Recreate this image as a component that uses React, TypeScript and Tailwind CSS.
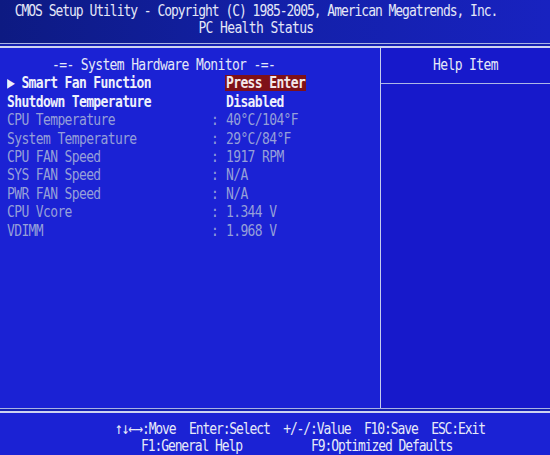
import React from "react";

const rows = [
  { label: "Smart Fan Function", value: "Press Enter", kind: "sub" },
  { label: "Shutdown Temperature", value: "Disabled", kind: "edit" },
  { label: "CPU Temperature", value: "40°C/104°F", kind: "info" },
  { label: "System Temperature", value: "29°C/84°F", kind: "info" },
  { label: "CPU FAN Speed", value: "1917 RPM", kind: "info" },
  { label: "SYS FAN Speed", value: "N/A", kind: "info" },
  { label: "PWR FAN Speed", value: "N/A", kind: "info" },
  { label: "CPU Vcore", value: "1.344 V", kind: "info" },
  { label: "VDIMM", value: "1.968 V", kind: "info" },
];

// BIOS glyphs are tall and narrow: stretch the text vertically
function T({ children }: { children: React.ReactNode }) {
  return <span className="inline-block scale-y-125 origin-center">{children}</span>;
}

export default function App() {
  return (
    <div
      className="w-[550px] h-[455px] overflow-hidden bg-[#1b22d4] flex flex-col text-[13px] tracking-[-0.63px] whitespace-pre"
      style={{ fontFamily: '"DejaVu Sans Mono", "Liberation Mono", monospace' }}
    >
      {/* Title */}
      <header className="h-[43px] bg-gradient-to-r from-[#0d1a82] via-[#1320a8] to-[#1822c0] pr-[38px] pt-[2px] text-center text-[#e4e7f7] leading-[17px]">
        <div className="tracking-[-1.03px]"><T>CMOS Setup Utility - Copyright (C) 1985-2005, American Megatrends, Inc.</T></div>
        <div><T>PC Health Status</T></div>
      </header>

      {/* double rule */}
      <div className="h-[1px] bg-[#aab4e4]" />
      <div className="h-[2px] bg-[#1420b0]" />
      <div className="h-[2px] bg-[#cdd3f1]" />

      {/* main area */}
      <div className="flex flex-1">
        <section className="w-[380px] pt-[8px]">
          <div className="h-[18.4px] leading-[18.4px] pl-[52px] text-[#e4e8f8]"><T>-=- System Hardware Monitor -=-</T></div>
          {rows.map((r) => {
            const bright = r.kind !== "info";
            return (
              <div key={r.label} className="h-[18.4px] leading-[18.4px] flex">
                <div className={`w-[211px] pl-[7px] ${bright ? "text-[#eef0fb] font-bold" : "text-[#959fd9]"}`}>
                  <T>
                    {r.kind === "sub" ? "▶ " : ""}
                    {r.label}
                  </T>
                </div>
                <div className="w-[15px] text-[#959fd9]"><T>{bright ? " " : ":"}</T></div>
                {r.kind === "sub" ? (
                  <div className="mt-[1px] h-[16px] leading-[16px] px-[1px] -ml-[1px] bg-[#7f1118] text-[#f4e8ea] font-bold"><T>{r.value}</T></div>
                ) : (
                  <div className={bright ? "text-[#eef0fb] font-bold" : "text-[#959fd9]"}><T>{r.value}</T></div>
                )}
              </div>
            );
          })}
        </section>
        <div className="w-[1px] bg-[#c4cbee]" />
        <section className="flex-1 flex flex-col bg-[#1719cb]">
          <div className="h-[35px] pt-[8px] leading-[18px] text-center text-[#e6e9f8]"><T>Help Item</T></div>
          <div className="h-[1px] bg-[#aeb6e6]" />
          <div className="flex-1" />
        </section>
      </div>

      {/* bottom double rule */}
      <div className="h-[1px] bg-[#aab4e4]" />
      <div className="h-[2px] bg-[#1420b0]" />
      <div className="h-[2px] bg-[#cdd3f1]" />

      {/* footer */}
      <footer className="h-[42px] pt-[7px] text-[#e6e9f8] leading-[17px] tracking-[-1.1px]">
        <div className="pl-[115px]"><T>↑↓←→:Move  Enter:Select  +/-/:Value  F10:Save  ESC:Exit</T></div>
        <div className="flex">
          <span className="pl-[141px] w-[311px]"><T>F1:General Help</T></span>
          <span><T>F9:Optimized Defaults</T></span>
        </div>
      </footer>
    </div>
  );
}
